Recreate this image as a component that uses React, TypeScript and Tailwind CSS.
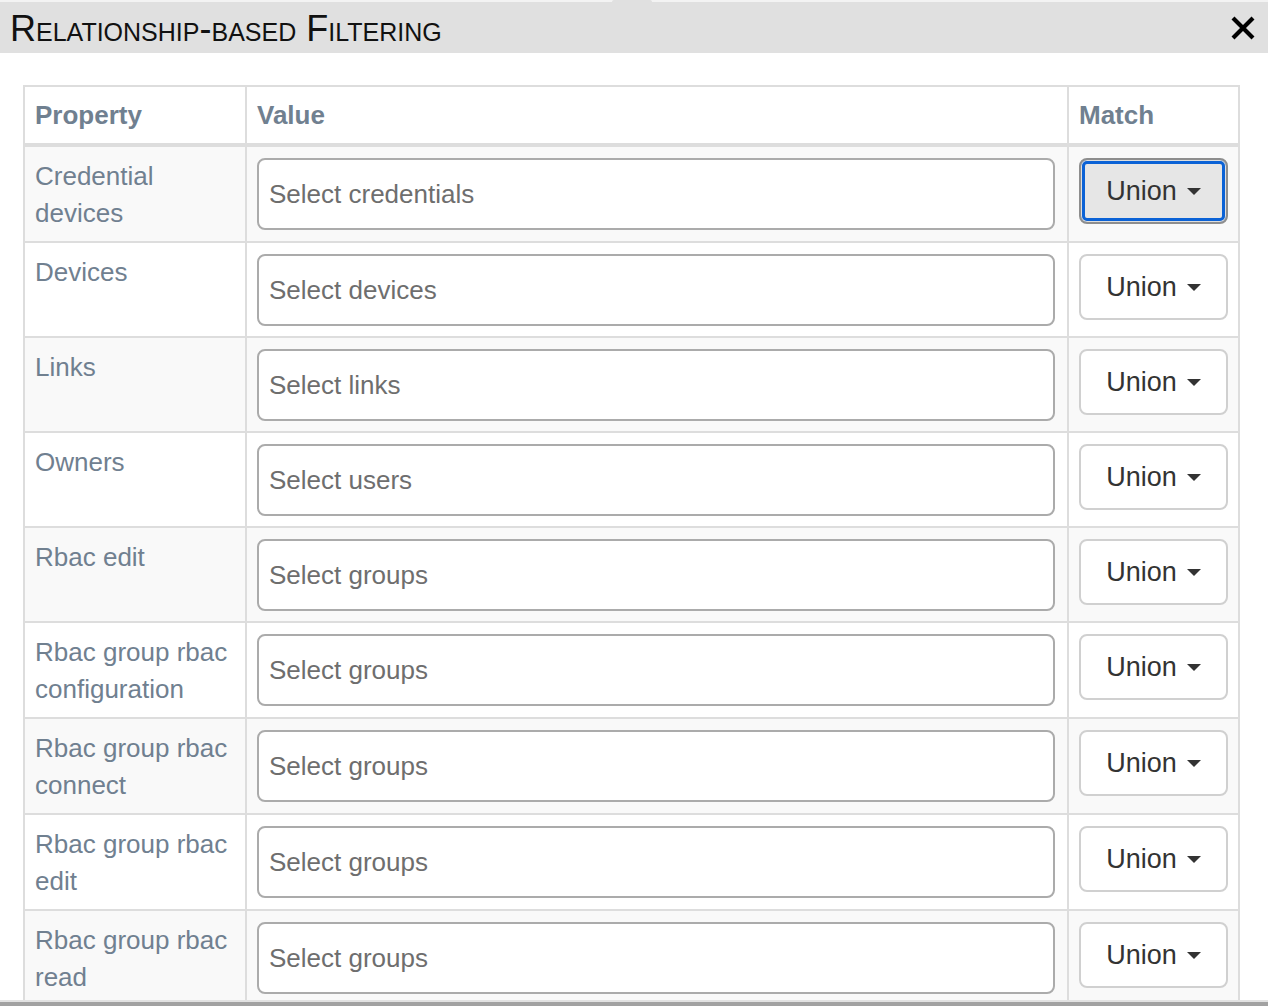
import React from 'react';

type Row = {
  label: string;
  placeholder: string;
};

const rows: Row[] = [
  { label: 'Credential devices', placeholder: 'Select credentials' },
  { label: 'Devices', placeholder: 'Select devices' },
  { label: 'Links', placeholder: 'Select links' },
  { label: 'Owners', placeholder: 'Select users' },
  { label: 'Rbac edit', placeholder: 'Select groups' },
  { label: 'Rbac group rbac configuration', placeholder: 'Select groups' },
  { label: 'Rbac group rbac connect', placeholder: 'Select groups' },
  { label: 'Rbac group rbac edit', placeholder: 'Select groups' },
  { label: 'Rbac group rbac read', placeholder: 'Select groups' },
];

const MatchButton: React.FC<{ focused?: boolean }> = ({ focused }) => {
  if (focused) {
    return (
      <button className="w-full h-[66px] rounded-[8px] border-2 border-[#8e8e8e] bg-[#e6e6e6] shadow-[inset_0_0_0_1px_#dedede,inset_0_0_0_4px_#0b62d6] flex items-center justify-center gap-[10px] text-[27px] text-[#333]">
        <span>Union</span>
        <span className="w-0 h-0 border-l-[7px] border-r-[7px] border-t-[7px] border-l-transparent border-r-transparent border-t-[#333]" />
      </button>
    );
  }
  return (
    <button className="w-full h-[66px] rounded-[8px] border-2 border-[#d0d0d0] bg-white flex items-center justify-center gap-[10px] text-[27px] text-[#333]">
      <span>Union</span>
      <span className="w-0 h-0 border-l-[7px] border-r-[7px] border-t-[7px] border-l-transparent border-r-transparent border-t-[#333]" />
    </button>
  );
};

export default function App() {
  return (
    <div className="w-[1268px] h-[1006px] overflow-hidden bg-white flex flex-col font-['Liberation_Sans',Arial,sans-serif]">
      {/* top edge */}
      <div className="h-[2px] bg-[#f3f3f3] flex">
        <div className="ml-[612px] w-[40px] h-[2px] bg-[#e0e0e0] rounded-t-[3px]" />
      </div>

      {/* title bar */}
      <div className="h-[51px] bg-[#e0e0e0] flex items-center justify-between pl-[10px] pr-[12px] pt-[2px]">
        <h1 className="text-[36px] leading-none text-[#111] [font-variant-caps:small-caps]">
          Relationship-based Filtering
        </h1>
        <svg width="26" height="26" viewBox="0 0 26 26" className="mb-[2px]">
          <path d="M3 3 L23 23 M23 3 L3 23" stroke="#000" strokeWidth="4.2" strokeLinecap="butt" />
        </svg>
      </div>

      {/* body */}
      <div className="flex-1 overflow-hidden pt-[32px] pl-[23px]">
        <div className="w-[1217px] border-l-2 border-t-2 border-[#dddddd]">
          <div className="grid grid-cols-[222px_822px_171px] bg-white">
            <div className="border-r-2 border-b-4 border-[#dddddd] px-[10px] py-[10px] text-[26px] leading-[36px] font-bold text-[#708090]">
              Property
            </div>
            <div className="border-r-2 border-b-4 border-[#dddddd] px-[10px] py-[10px] text-[26px] leading-[36px] font-bold text-[#708090]">
              Value
            </div>
            <div className="border-r-2 border-b-4 border-[#dddddd] px-[10px] py-[10px] text-[26px] leading-[36px] font-bold text-[#708090]">
              Match
            </div>
          </div>

          {rows.map((row, i) => (
            <div
              key={i}
              className={
                'grid grid-cols-[222px_822px_171px] ' + (i % 2 === 0 ? 'bg-[#f9f9f9]' : 'bg-white')
              }
            >
              <div className="border-r-2 border-b-2 border-[#dddddd] pl-[10px] pr-[6px] pt-[11px] pb-[10px] text-[26px] leading-[36.5px] text-[#708090]">
                {row.label}
              </div>
              <div className="border-r-2 border-b-2 border-[#dddddd] pl-[10px] pr-[12px] pt-[11px] pb-[10px]">
                <div className="h-[72px] rounded-[8px] border-2 border-[#ababab] bg-white flex items-center px-[10px] text-[26px] text-[#6e6e6e]">
                  {row.placeholder}
                </div>
              </div>
              <div className="border-r-2 border-b-2 border-[#dddddd] px-[10px] pt-[11px] pb-[10px]">
                <MatchButton focused={i === 0} />
              </div>
            </div>
          ))}
        </div>
      </div>

      {/* bottom edge */}
      <div className="h-[2px] bg-[#e2e2e2]" />
      <div className="h-[4px] bg-[#a2a2a2]" />
    </div>
  );
}
